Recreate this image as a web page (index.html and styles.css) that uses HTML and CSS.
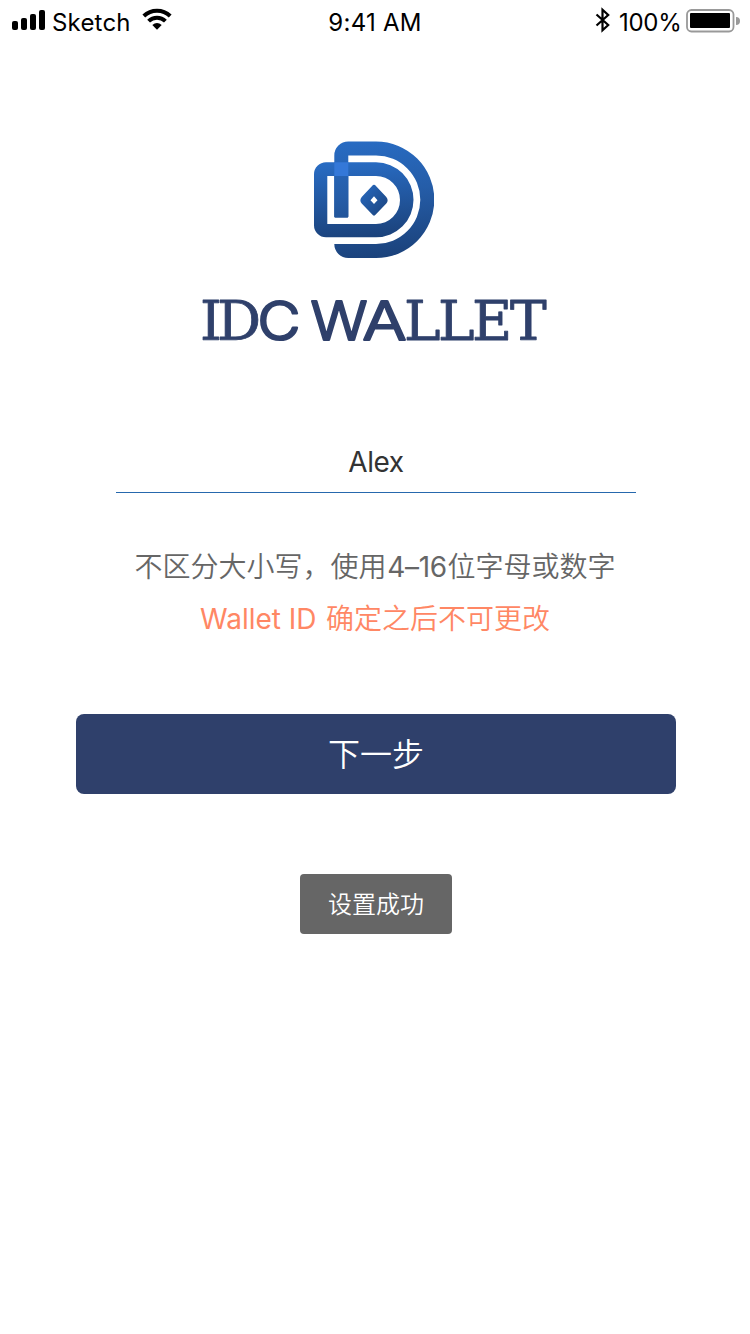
FILE: index.html
```
<!DOCTYPE html>
<html lang="zh-CN">
<head>
<meta charset="utf-8">
<title>IDC Wallet</title>
<link rel="stylesheet" href="styles.css">
</head>
<body>
<div class="screen">
  <header class="status">
    <div class="status-left">
      <svg class="signal" width="34" height="22" viewBox="0 0 34 22"><rect x="0" y="13" width="6" height="9" rx="2"/><rect x="9" y="10" width="6" height="12" rx="2"/><rect x="18" y="6" width="6" height="16" rx="2"/><rect x="27" y="2" width="6" height="20" rx="2"/></svg>
      <span class="carrier">Sketch</span>
      <svg class="wifi" width="30" height="22" viewBox="0 0 30 22"><path d="M1.800 8A19 19 0 0 1 28.200 8" fill="none" stroke="#000" stroke-width="4"/><path d="M6.600 13.100A12 12 0 0 1 23.400 13.100" fill="none" stroke="#000" stroke-width="4"/><path d="M10.300 16.900Q15 13.300 19.700 16.900L15 21.800Z"/></svg>
    </div>
    <span class="time">9:41 AM</span>
    <div class="status-right">
      <svg class="bluetooth" width="16" height="26" viewBox="0 0 16 26"><path d="M1.500 7.500L13.200 18 7.500 23.200V2.800L13.200 8 1.500 18.500" fill="none" stroke="#000" stroke-width="2.200"/></svg>
      <span class="percent">100%</span>
      <svg class="battery" width="54" height="24" viewBox="0 0 54 24"><rect x="1" y="1" width="46.500" height="21.500" rx="4.500" fill="#fff" stroke="#999" stroke-width="1.800"/><rect x="4" y="4" width="40" height="15" rx="1"/><path d="M50 8a4 4 0 0 1 0 8z" fill="#999"/></svg>
    </div>
  </header>

  <main class="content">
    <svg class="logo" width="120" height="118" viewBox="314 141 120 118">
      <defs>
        <linearGradient id="blue" gradientUnits="userSpaceOnUse" x1="366" y1="141" x2="380" y2="258"><stop offset="0" stop-color="#286bc2"/><stop offset=".45" stop-color="#255da8"/><stop offset="1" stop-color="#1b427b"/></linearGradient>
        <linearGradient id="inner" gradientUnits="userSpaceOnUse" x1="362" y1="162" x2="368" y2="238"><stop offset="0" stop-color="#286bc2"/><stop offset="1" stop-color="#1b427b"/></linearGradient>
        <linearGradient id="gem" x1="0" y1="0" x2="1" y2="1"><stop offset="0" stop-color="#286bc2"/><stop offset="1" stop-color="#1b427b"/></linearGradient>
      </defs>
      <path fill="url(#blue)" d="M334.300 216.500V155.500a14 14 0 0 1 14-14H376a58.300 58.300 0 0 1 0 116.600H348.300a14 14 0 0 1-14-14H376a44.300 44.300 0 0 0 0-88.600H348.300V216.500q0 1-1 1H335.300q-1 0-1-1z"/>
      <path fill="url(#inner)" fill-rule="evenodd" d="M326 162.300H376a37.500 37.500 0 0 1 0 75H326a12 12 0 0 1-12-12V174.300a12 12 0 0 1 12-12zM327.300 176V224H376a24 24 0 0 0 0-48z"/>
      <path fill="url(#blue)" d="M334.300 175h14V216.500q0 1-1 1H335.300q-1 0-1-1z"/>
      <rect x="334.300" y="162.300" width="14" height="13.700" fill="#3478d8"/>
      <path fill="url(#gem)" fill-rule="evenodd" d="M373 185.100q1-.9 2 0L386.300 197Q389 200.300 386.300 203.600L375 215.300q-1 .9-2 0L361.700 203.600Q359 200.300 361.700 197zM374 196.300L370.500 200.200 374 204.100 377.500 200.200z"/>
    </svg>

    <svg class="wordmark" width="360" height="80" viewBox="0 0 360 80">
      <text y="60.300" x="5 22">ID</text>
      <g class="plain">
        <text x="62.500" y="60.300" textLength="43" lengthAdjust="spacingAndGlyphs">C</text>
        <text x="115.500" y="60.300" textLength="57" lengthAdjust="spacingAndGlyphs">W</text>
        <text x="167.500" y="60.300" textLength="44" lengthAdjust="spacingAndGlyphs">A</text>
      </g>
      <text y="60.300" x="209 243 277 315">LLET</text>
    </svg>

    <div class="field">Alex</div>
    <p class="hint">不区分大小写，使用<span class="latin range">4–16</span>位字母或数字</p>
    <p class="warning"><span class="latin id">Wallet ID </span>确定之后不可更改</p>
    <button class="next">下一步</button>
    <div class="toast">设置成功</div>
  </main>
</div>
</body>
</html>
```
FILE: styles.css
```
* { box-sizing: border-box; }
body { margin: 0; background: #fff; }
.screen { width: 750px; height: 1334px; font-family: Inter, "Noto Sans CJK SC", sans-serif; overflow: hidden; }
.status { height: 40px; display: grid; grid-template-columns: 1fr auto 1fr; align-items: start; padding: 0 10px 0 12px; font-size: 24px; line-height: 46px; color: #000; }
.status-left, .status-right { display: flex; align-items: flex-start; }
.status-right { justify-content: flex-end; }
.signal { margin-top: 8px; }
.carrier { margin-left: 6px; width: 80px; letter-spacing: .2px; white-space: nowrap; }
.time { letter-spacing: .25px; margin-right: 2px; }
.wifi { margin: 8px 0 0 10px; }
.bluetooth { margin-top: 7px; }
.percent { margin-left: 8px; width: 61px; white-space: nowrap; letter-spacing: -.3px; }
.battery { margin: 9px 0 0 6px; }
.content { display: flex; flex-direction: column; align-items: center; padding-top: 101px; }
.logo { display: block; margin-right: 2px; }
.wordmark { display: block; margin-top: 21px; }
.wordmark text { font-family: "DejaVu Serif", serif; font-size: 55px; fill: #2f406b; stroke: #2f406b; stroke-width: .8px; stroke-linejoin: round; }
.wordmark .plain text { font-family: Inter, sans-serif; font-size: 54px; font-weight: 300; stroke-width: 2.2px; }
.field { width: 520px; height: 61px; margin: 72px 0 0 2px; border-bottom: 1px solid #2668ad; text-align: center; font-size: 28px; line-height: 61px; font-weight: 400; letter-spacing: -.4px; color: #333; }
.hint, .warning { margin: 0; font-size: 28px; line-height: 52px; font-weight: 350; white-space: nowrap; }
.hint { margin-top: 48px; color: #666; }
.warning { color: #ff8764; }
.latin { display: inline-block; white-space: pre; font-weight: 400; }
.range { width: 61px; text-align: center; letter-spacing: -.3px; }
.id { width: 126px; }
.next { width: 600px; height: 80px; margin: 69px 0 0 2px; padding: 1px 0 0; border: 0; border-radius: 8px; background: #2f406b; color: #fff; font: 350 32px/79px Inter, "Noto Sans CJK SC", sans-serif; }
.toast { width: 152px; height: 60px; margin: 80px 0 0 2px; border-radius: 4px; background: #666; color: #fff; text-align: center; font-size: 24px; font-weight: 350; line-height: 61px; }
```
